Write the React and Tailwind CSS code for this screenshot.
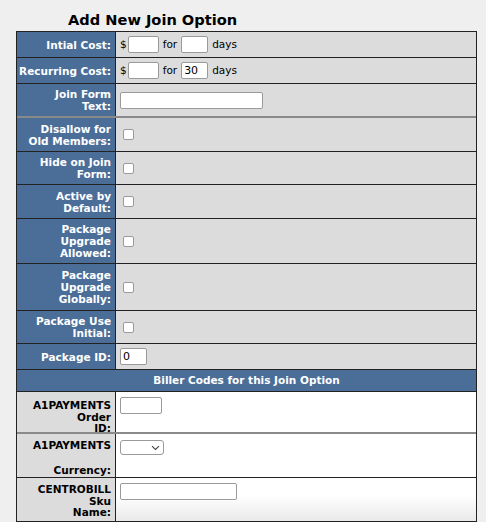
const font = { fontFamily: '"DejaVu Sans", Verdana, sans-serif' };

function TextBox({ w, value = '' }) {
  return (
    <input
      type="text"
      defaultValue={value}
      className="h-[17px] rounded-[2px] border border-[#9a9a9a] bg-white px-[2px] text-[11px] leading-[15px] text-black outline-none"
      style={{ width: w }}
    />
  );
}

function Check() {
  return (
    <input
      type="checkbox"
      className="ml-[3px] h-[11px] w-[11px] appearance-none rounded-[2px] border border-[#9a9a9a] bg-white"
    />
  );
}

// h = row height incl. its bottom border
function Row({ label, children, h, border = 'border-[#222]', thick = false }) {
  return (
    <div className={`flex ${h} ${thick ? 'border-b-2' : 'border-b'} ${border}`}>
      <div className="flex w-[99px] shrink-0 items-center justify-end border-r border-[#222] bg-[#4b6e99] pr-[4px] text-right text-[10.5px] leading-[12px] font-bold whitespace-nowrap text-white">
        <span>{label}</span>
      </div>
      <div className="flex flex-1 items-center bg-[#dcdcdc] px-[4px] text-[10.5px] text-black">
        {children}
      </div>
    </div>
  );
}

function BillerRow({ label, children, h, pad, lead = 'leading-[11.5px]', border = 'border-[#222]', thick = false, last = false }) {
  return (
    <div className={`flex ${h} ${thick ? 'border-b-2' : 'border-b'} ${border}`}>
      <div className={`w-[99px] shrink-0 border-r border-[#222] bg-[#dcdcdc] pr-[4px] text-right text-[10.5px] font-bold text-black ${pad} ${lead}`}>
        {label}
      </div>
      <div
        className={`flex flex-1 items-start px-[4px] pt-[5px] ${
          last ? 'bg-gradient-to-b from-white from-40% to-[#e9e9e9]' : 'bg-white'
        }`}
      >
        {children}
      </div>
    </div>
  );
}

export default function App() {
  return (
    <div className="h-[522px] w-[486px] overflow-hidden bg-[#efefef]" style={font}>
      <h1 className="pt-[11px] pb-[2px] pl-[68px] text-[14.6px] leading-[18px] font-bold text-black">
        Add New Join Option
      </h1>
      <div className="ml-[16px] w-[461px] border-t border-r border-l border-[#222]">
        <Row label="Intial Cost:" h="h-[26px]">
          <span>$</span>
          <span className="ml-[1px] flex">
            <TextBox w={31} />
          </span>
          <span className="mx-[4px]">for</span>
          <TextBox w={27} />
          <span className="ml-[4px]">days</span>
        </Row>
        <Row label="Recurring Cost:" h="h-[26px]">
          <span>$</span>
          <span className="ml-[1px] flex">
            <TextBox w={31} />
          </span>
          <span className="mx-[4px]">for</span>
          <TextBox w={27} value="30" />
          <span className="ml-[4px]">days</span>
        </Row>
        <Row label={<>Join Form<br />Text:</>} h="h-[34px]" border="border-[#8a8a8a]" thick>
          <TextBox w={143} />
        </Row>
        <Row label={<>Disallow for<br />Old Members:</>} h="h-[34px]">
          <Check />
        </Row>
        <Row label={<>Hide on Join<br />Form:</>} h="h-[33px]">
          <Check />
        </Row>
        <Row label={<>Active by<br />Default:</>} h="h-[34px]">
          <Check />
        </Row>
        <Row label={<>Package<br />Upgrade<br />Allowed:</>} h="h-[45px]">
          <Check />
        </Row>
        <Row label={<>Package<br />Upgrade<br />Globally:</>} h="h-[47px]">
          <Check />
        </Row>
        <Row label={<>Package Use<br />Initial:</>} h="h-[33px]">
          <Check />
        </Row>
        <Row label="Package ID:" h="h-[26px]">
          <TextBox w={27} value="0" />
        </Row>
        <div className="flex h-[22px] items-center justify-center border-b border-[#222] bg-[#4b6e99] text-[10.5px] font-bold text-white">
          Biller Codes for this Join Option
        </div>
        <BillerRow label={<>A1PAYMENTS<br />Order<br />ID:</>} h="h-[42px]" pad="pt-[8px]" border="border-[#8a8a8a]" thick>
          <TextBox w={42} />
        </BillerRow>
        <BillerRow label={<>A1PAYMENTS<br /><br />Currency:</>} h="h-[44px]" pad="pt-[5px]" lead="leading-[12.5px]">
          <div className="mt-[1px] flex h-[15px] w-[44px] items-center justify-end rounded-[3px] border border-[#9a9a9a] bg-white pr-[3px]">
            <svg width="9" height="6" viewBox="0 0 9 6" fill="none">
              <path d="M1 1.2 L4.5 4.5 L8 1.2" stroke="#444" strokeWidth="1.1" />
            </svg>
          </div>
        </BillerRow>
        <BillerRow label={<>CENTROBILL<br />Sku<br />Name:</>} h="h-[44px]" pad="pt-[6px]" last>
          <TextBox w={117} />
        </BillerRow>
      </div>
    </div>
  );
}
